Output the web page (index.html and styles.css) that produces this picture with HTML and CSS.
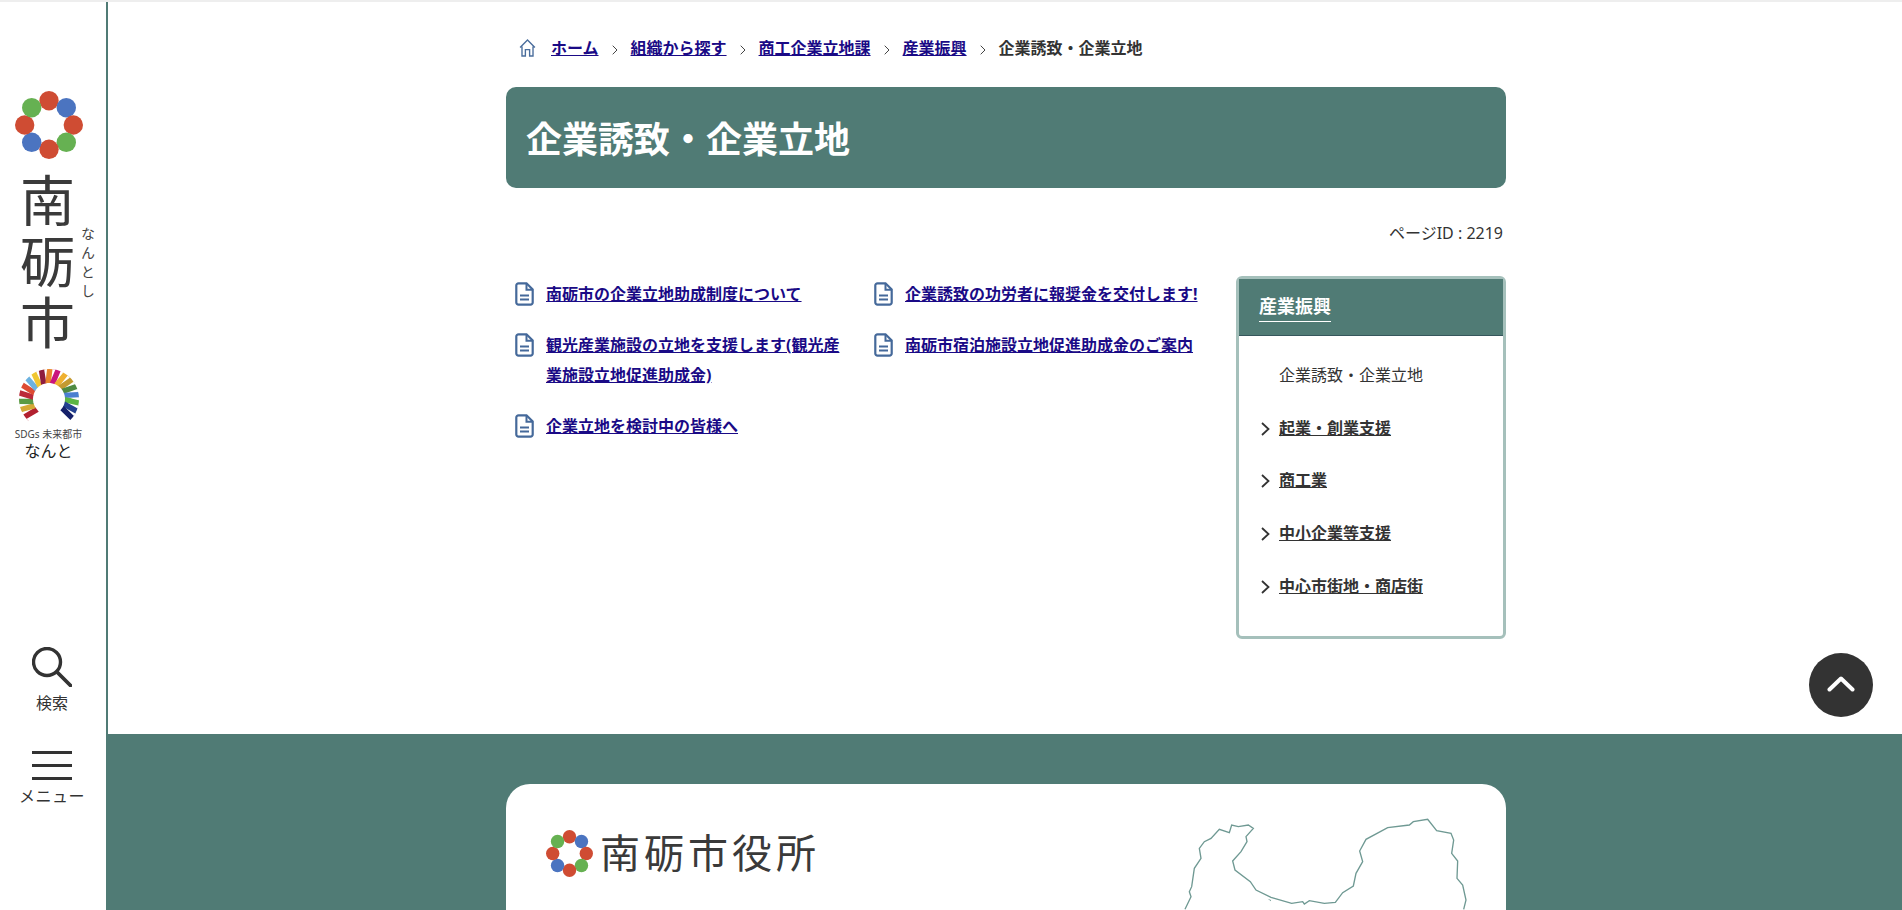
FILE: index.html
```html
<!DOCTYPE html>
<html lang="ja">
<head>
<meta charset="utf-8">
<title>企業誘致・企業立地</title>
<link rel="stylesheet" href="styles.css">
</head>
<body>
<svg class="defs" width="0" height="0" aria-hidden="true">
  <defs>
    <symbol id="flower" viewBox="0 0 68 68">
      <circle cx="34" cy="9.700" r="9.700" fill="#cf4c33"/>
      <circle cx="51.3" cy="16.7" r="9.700" fill="#4b74c0"/>
      <circle cx="58.3" cy="34" r="9.700" fill="#cf4c33"/>
      <circle cx="51.3" cy="51.3" r="9.700" fill="#66b152"/>
      <circle cx="34" cy="58.3" r="9.700" fill="#cf4c33"/>
      <circle cx="16.7" cy="51.3" r="9.700" fill="#4b74c0"/>
      <circle cx="9.700" cy="34" r="9.700" fill="#cf4c33"/>
      <circle cx="16.7" cy="16.7" r="9.700" fill="#66b152"/>
    </symbol>
    <symbol id="doc" viewBox="0 0 19 24">
      <path d="M1.300 3.500a2.200 2.200 0 0 1 2.200-2.200h8l6.200 6.200v13a2.200 2.200 0 0 1-2.200 2.200h-12a2.200 2.200 0 0 1-2.200-2.200z" fill="none" stroke="#45699a" stroke-width="2.200"/>
      <path d="M11.500 1.500v6.300h6.300" fill="none" stroke="#45699a" stroke-width="2"/>
      <path d="M5 13.500h9M5 17.500h9" stroke="#45699a" stroke-width="1.800"/>
    </symbol>
    <symbol id="crumb" viewBox="0 0 6 10">
      <path d="M.7.7 5 5 .7 9.300" fill="none" stroke="#444" stroke-width="1"/>
    </symbol>
    <symbol id="chev" viewBox="0 0 9 14">
      <path d="M1 1l6.500 6L1 13" fill="none" stroke="#333" stroke-width="1.800"/>
    </symbol>
  </defs>
</svg>
<div class="page">
  <aside class="rail">
    <a class="brand">
      <svg class="brand-flower"><use href="#flower"/></svg>
      <div class="brand-name">
        <span class="brand-kanji">南<br>砺<br>市</span>
        <span class="brand-kana">なんとし</span>
      </div>
    </a>
    <div class="sdgs">
      <svg class="sdgs-wheel" viewBox="-31 -31 62 56">
        <g fill="none" stroke-width="14">
          <circle r="23" pathLength="360" stroke-dasharray="14 346" stroke="#b2202f" transform="rotate(135)"/>
          <circle r="23" pathLength="360" stroke-dasharray="14 346" stroke="#d4a936" transform="rotate(151)"/>
          <circle r="23" pathLength="360" stroke-dasharray="14 346" stroke="#5a9a44" transform="rotate(167)"/>
          <circle r="23" pathLength="360" stroke-dasharray="14 346" stroke="#bb2a3a" transform="rotate(183)"/>
          <circle r="23" pathLength="360" stroke-dasharray="14 346" stroke="#dd4b33" transform="rotate(199)"/>
          <circle r="23" pathLength="360" stroke-dasharray="14 346" stroke="#6cb2e0" transform="rotate(215)"/>
          <circle r="23" pathLength="360" stroke-dasharray="14 346" stroke="#f0c632" transform="rotate(231)"/>
          <circle r="23" pathLength="360" stroke-dasharray="14 346" stroke="#8f1d3e" transform="rotate(247)"/>
          <circle r="23" pathLength="360" stroke-dasharray="14 346" stroke="#e8862c" transform="rotate(263)"/>
          <circle r="23" pathLength="360" stroke-dasharray="14 346" stroke="#c9147d" transform="rotate(279)"/>
          <circle r="23" pathLength="360" stroke-dasharray="14 346" stroke="#efb030" transform="rotate(295)"/>
          <circle r="23" pathLength="360" stroke-dasharray="14 346" stroke="#c49a30" transform="rotate(311)"/>
          <circle r="23" pathLength="360" stroke-dasharray="14 346" stroke="#4e8a42" transform="rotate(327)"/>
          <circle r="23" pathLength="360" stroke-dasharray="14 346" stroke="#4a7fd0" transform="rotate(343)"/>
          <circle r="23" pathLength="360" stroke-dasharray="14 346" stroke="#5cb544" transform="rotate(359)"/>
          <circle r="23" pathLength="360" stroke-dasharray="14 346" stroke="#23408f" transform="rotate(375)"/>
          <circle r="23" pathLength="360" stroke-dasharray="14 346" stroke="#15206a" transform="rotate(391)"/>
        </g>
      </svg>
      <div class="sdgs-label">SDGs 未来都市</div>
      <div class="sdgs-city">なんと</div>
    </div>
    <div class="rail-tools">
      <button class="tool tool-search">
        <svg class="tool-search-icon" viewBox="0 0 40 40"><circle cx="15" cy="15" r="13.500" fill="none" stroke="#333" stroke-width="3.400"/><path d="M25 25l13.500 13.500" stroke="#333" stroke-width="3.800" stroke-linecap="round"/></svg>
        <span>検索</span>
      </button>
      <button class="tool tool-menu">
        <span class="bars"><i></i><i></i><i></i></span>
        <span class="tool-menu-label">メニュー</span>
      </button>
    </div>
  </aside>

  <div class="main">
    <div class="content">
      <nav class="crumbs">
        <svg class="crumb-home" viewBox="0 0 16 17"><path d="M1 8 8 1l7 7M2.800 7v9h3.200v-6h4v6h3.200V7" fill="none" stroke="#4a6d9c" stroke-width="1.300"/></svg>
        <a href="#">ホーム</a>
        <svg class="crumb-sep"><use href="#crumb"/></svg>
        <a href="#">組織から探す</a>
        <svg class="crumb-sep"><use href="#crumb"/></svg>
        <a href="#">商工企業立地課</a>
        <svg class="crumb-sep"><use href="#crumb"/></svg>
        <a href="#">産業振興</a>
        <svg class="crumb-sep"><use href="#crumb"/></svg>
        <span>企業誘致・企業立地</span>
      </nav>

      <h1 class="banner">企業誘致・企業立地</h1>
      <p class="page-id">ページID : 2219</p>

      <div class="body">
        <ul class="docs">
          <li class="doc"><svg class="doc-icon"><use href="#doc"/></svg><a href="#">南砺市の企業立地助成制度について</a></li>
          <li class="doc"><svg class="doc-icon"><use href="#doc"/></svg><a href="#">企業誘致の功労者に報奨金を交付します!</a></li>
          <li class="doc"><svg class="doc-icon"><use href="#doc"/></svg><a href="#">観光産業施設の立地を支援します(観光産業施設立地促進助成金)</a></li>
          <li class="doc"><svg class="doc-icon"><use href="#doc"/></svg><a href="#">南砺市宿泊施設立地促進助成金のご案内</a></li>
          <li class="doc"><svg class="doc-icon"><use href="#doc"/></svg><a href="#">企業立地を検討中の皆様へ</a></li>
        </ul>

        <section class="side">
          <h2 class="side-head"><a href="#">産業振興</a></h2>
          <ul class="side-list">
            <li class="side-item is-current"><span>企業誘致・企業立地</span></li>
            <li class="side-item"><svg class="side-chev"><use href="#chev"/></svg><a href="#">起業・創業支援</a></li>
            <li class="side-item"><svg class="side-chev"><use href="#chev"/></svg><a href="#">商工業</a></li>
            <li class="side-item"><svg class="side-chev"><use href="#chev"/></svg><a href="#">中小企業等支援</a></li>
            <li class="side-item"><svg class="side-chev"><use href="#chev"/></svg><a href="#">中心市街地・商店街</a></li>
          </ul>
        </section>
      </div>
    </div>

    <footer class="footer">
      <div class="card">
        <div class="card-brand">
          <svg class="card-flower"><use href="#flower"/></svg>
          <span class="card-name">南砺市役所</span>
        </div>
        <svg class="card-map" viewBox="0 0 1080 360"><path d="M72 358 90 320 85 305 92 290 100 235 120 205 115 175 130 155 150 145 175 118 205 128 212 105 232 110 262 105 277 115 255 140 258 155 240 185 215 213 222 240 268 275 285 300 330 322 392 340 425 335 430 342 445 332 490 340 523 337 545 308 577 288 585 250 605 215 596 183 615 148 680 113 745 105 757 95 800 88 827 122 870 130 878 150 872 190 890 213 888 265 905 285 915 330 908 358" fill="none" stroke="#6f9993" stroke-width="4"/><path d="M320 326l10 4v4z" fill="#6f9993"/></svg>
      </div>
    </footer>
  </div>
</div>
<a class="to-top" href="#" aria-label="ページトップへ"><svg viewBox="0 0 28 16" class="to-top-icon"><path d="M2.500 13.500 14 2.500l11.500 11" fill="none" stroke="#fff" stroke-width="4" stroke-linecap="round" stroke-linejoin="round"/></svg></a>
</body>
</html>
```

FILE: styles.css
```css
* { box-sizing: border-box; }
html, body { margin: 0; height: 100%; }
body {
  font-family: "Noto Sans", "Noto Sans CJK JP", sans-serif;
  font-size: 16px;
  color: #333;
  background: #fff;
  overflow: hidden;
}
ul { list-style: none; margin: 0; padding: 0; }
.defs { position: absolute; }

.page {
  display: flex;
  height: 910px;
  overflow: hidden;
  border-top: 2px solid #eee;
}

/* left rail */
.rail {
  flex: 0 0 106px;
  display: flex;
  flex-direction: column;
  padding-top: 89px;
}
.brand { display: block; }
.brand-flower { display: block; width: 68px; height: 68px; margin-left: 15px; }
.brand-name { display: flex; margin: 10px 0 0 20px; }
.brand-kanji { font-size: 55px; line-height: 61px; font-weight: 400; width: 59px; color: #3a3a3a; }
.brand-kana {
  writing-mode: vertical-rl;
  font-size: 14px;
  letter-spacing: 5px;
  line-height: 16px;
  margin-top: 58px;
  color: #444;
}
.sdgs { margin-top: 16px; text-align: center; width: 97px; }
.sdgs-wheel { display: block; width: 62px; height: 56px; margin: 0 auto 4px; }
.sdgs-label { font-size: 10px; line-height: 12px; color: #444; white-space: nowrap; }
.sdgs-city { font-size: 16px; line-height: 20px; margin-top: 1px; color: #222; }

.rail-tools { margin-top: 186px; display: flex; flex-direction: column; gap: 36px; width: 104px; }
.tool {
  border: 0; background: none; padding: 0; font: inherit; color: #333;
  display: flex; flex-direction: column; align-items: center; line-height: 24px;
}
.tool-search-icon { width: 40px; height: 40px; margin-bottom: 4px; }
.tool-menu-label { letter-spacing: .5px; }
.bars { display: flex; flex-direction: column; gap: 10px; width: 40px; margin-bottom: 4px; }
.bars i { display: block; height: 3px; background: #333; }

/* main */
.main { flex: 1; border-left: 2px solid #507b75; display: flex; flex-direction: column; min-width: 0; position: relative; }
.content { width: 1000px; margin-left: 398px; flex: 0 0 732px; }

.crumbs {
  display: flex; align-items: center; height: 24px; margin: 34px 0 0 13px;
  font-weight: 700; line-height: 24px; color: #333;
}
.crumbs a { color: #1a0a86; text-decoration: underline; }
.crumb-home { width: 17px; height: 18px; margin-right: 15px; }
.crumb-sep { width: 6px; height: 10px; margin: 3px 13px 0; }

.banner {
  margin: 27px 0 0;
  height: 101px;
  background: #507b75;
  border-radius: 10px;
  color: #fff;
  font-size: 36px;
  font-weight: 700;
  line-height: 105px;
  padding-left: 20px;
}
.page-id { margin: 33px 3px 0 0; text-align: right; line-height: 24px; }

.body { display: flex; margin-top: 31px; justify-content: space-between; }
.docs {
  display: grid;
  grid-template-columns: 359px 330px;
  align-content: start;
  row-gap: 21px;
  padding: 3px 0 0 9px;
}
.doc { display: flex; align-items: flex-start; gap: 12px; width: 320px; line-height: 30px; }
.doc a { color: #1a0a86; font-weight: 700; width: 300px; flex: none; }
.doc:nth-child(even) { width: 340px; }
.doc-icon { flex: none; width: 19px; height: 24px; margin-top: 3px; }

.side {
  width: 270px; height: 363px;
  border: 3px solid #a5c0bb;
  border-radius: 6px;
  background: #fff;
}
.side-head {
  margin: 0; height: 57px; background: #507b75;
  border-bottom: 1px solid #36565c;
  padding: 12px 0 0 20px;
  font-size: 18px; line-height: 30px; font-weight: 700;
}
.side-head a { color: #fff; display: inline-block; border-bottom: 1px solid #fff; text-decoration: none; }
.side-list { padding-top: 13px; }
.side-item { position: relative; height: 52.700px; line-height: 52px; padding-left: 40px; }
.side-item a { color: #333; font-weight: 700; text-decoration: underline; }
.side-chev { position: absolute; left: 22px; top: 20px; width: 9px; height: 14px; }

/* footer */
.footer { flex: 1; background: #507b75; margin-left: -2px; padding: 50px 0 0 400px; }
.card {
  width: 1000px; height: 400px; background: #fff; border-radius: 24px;
  display: flex; position: relative; padding: 45px 0 0 40px;
}
.card-brand { display: flex; align-items: center; height: 48px; }
.card-flower { width: 47px; height: 47px; }
.card-name { font-size: 40px; letter-spacing: 4px; font-weight: 400; line-height: 48px; margin-left: 7px; color: #3a3a3a; }
.card-map { position: absolute; left: 655px; top: 6px; width: 360px; height: 120px; }

.to-top {
  position: fixed; left: 1809px; top: 653px; width: 64px; height: 64px;
  border-radius: 50%; background: #333;
  display: flex; align-items: center; justify-content: center;
}
.to-top-icon { width: 28px; height: 16px; margin-top: -2px; }
```
